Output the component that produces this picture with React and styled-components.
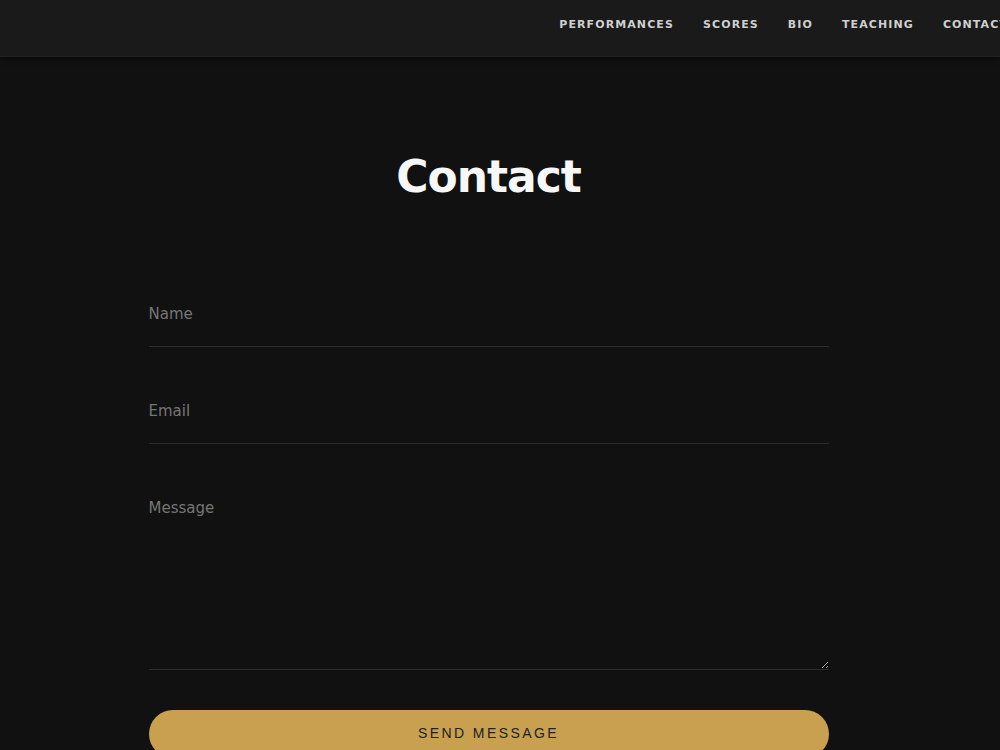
import React from "react";
import styled, { createGlobalStyle } from "styled-components";

const Global = createGlobalStyle`
  html, body { margin: 0; padding: 0; background: #111111; }
  body { font-family: "DejaVu Sans", "Noto Sans", sans-serif; overflow: hidden; }
  * { box-sizing: border-box; }
`;

const Header = styled.header`
  height: 57px;
  background: #1a1a1a;
  border-bottom: 1px solid #222;
  box-shadow: 0 2px 6px rgba(0,0,0,0.5);
  display: flex;
  align-items: center;
  justify-content: flex-end;
  overflow: hidden;
  white-space: nowrap;
`;

const Nav = styled.nav`
  display: flex;
  gap: 29px;
  margin-right: -8px;
  padding-bottom: 8px;
`;

const NavLink = styled.a`
  font-family: "DejaVu Sans", sans-serif;
  font-size: 11px;
  font-weight: 600;
  letter-spacing: 1.1px;
  color: #cfcfcf;
  text-decoration: none;
  text-transform: uppercase;
`;

const Main = styled.main`
  padding: 0 23px 0 0;
`;

const Container = styled.div`
  width: 680px;
  margin: 0 auto;
`;

const Title = styled.h1`
  margin: 92px 0 87px;
  text-align: center;
  font-family: "DejaVu Sans", sans-serif;
  font-weight: 700;
  font-size: 44px;
  line-height: 56px;
  letter-spacing: -1px;
  color: #f7f7f7;
`;

const Form = styled.form`
  display: flex;
  flex-direction: column;
`;

const fieldBase = `
  width: 100%;
  background: transparent;
  border: none;
  border-bottom: 1px solid #2b2b2b;
  color: #ddd;
  font-family: "DejaVu Sans", sans-serif;
  font-size: 15px;
  line-height: 20px;
  outline: none;
  &::placeholder { color: #767676; }
`;

const Input = styled.input`
  ${fieldBase}
  padding: 12px 0 22px;
  height: 55px;
  margin-bottom: 42px;
`;

const TextArea = styled.textarea`
  ${fieldBase}
  padding: 12px 0 0;
  height: 184px;
  resize: vertical;
  margin-bottom: 40px;
`;

const Button = styled.button`
  height: 48px;
  border: none;
  border-radius: 24px;
  background: #c9a050;
  color: #222;
  font-family: "Liberation Sans", Arial, sans-serif;
  font-size: 14px;
  letter-spacing: 2.4px;
  text-transform: uppercase;
  padding: 0 0 2px;
  cursor: pointer;
`;

export default function App() {
  return (
    <>
      <Global />
      <Header>
        <Nav>
          <NavLink href="#">Performances</NavLink>
          <NavLink href="#">Scores</NavLink>
          <NavLink href="#">Bio</NavLink>
          <NavLink href="#">Teaching</NavLink>
          <NavLink href="#">Contact</NavLink>
        </Nav>
      </Header>
      <Main>
        <Container>
          <Title>Contact</Title>
          <Form onSubmit={(e) => e.preventDefault()}>
            <Input type="text" placeholder="Name" />
            <Input type="email" placeholder="Email" />
            <TextArea placeholder="Message" />
            <Button type="submit">Send Message</Button>
          </Form>
        </Container>
      </Main>
    </>
  );
}
